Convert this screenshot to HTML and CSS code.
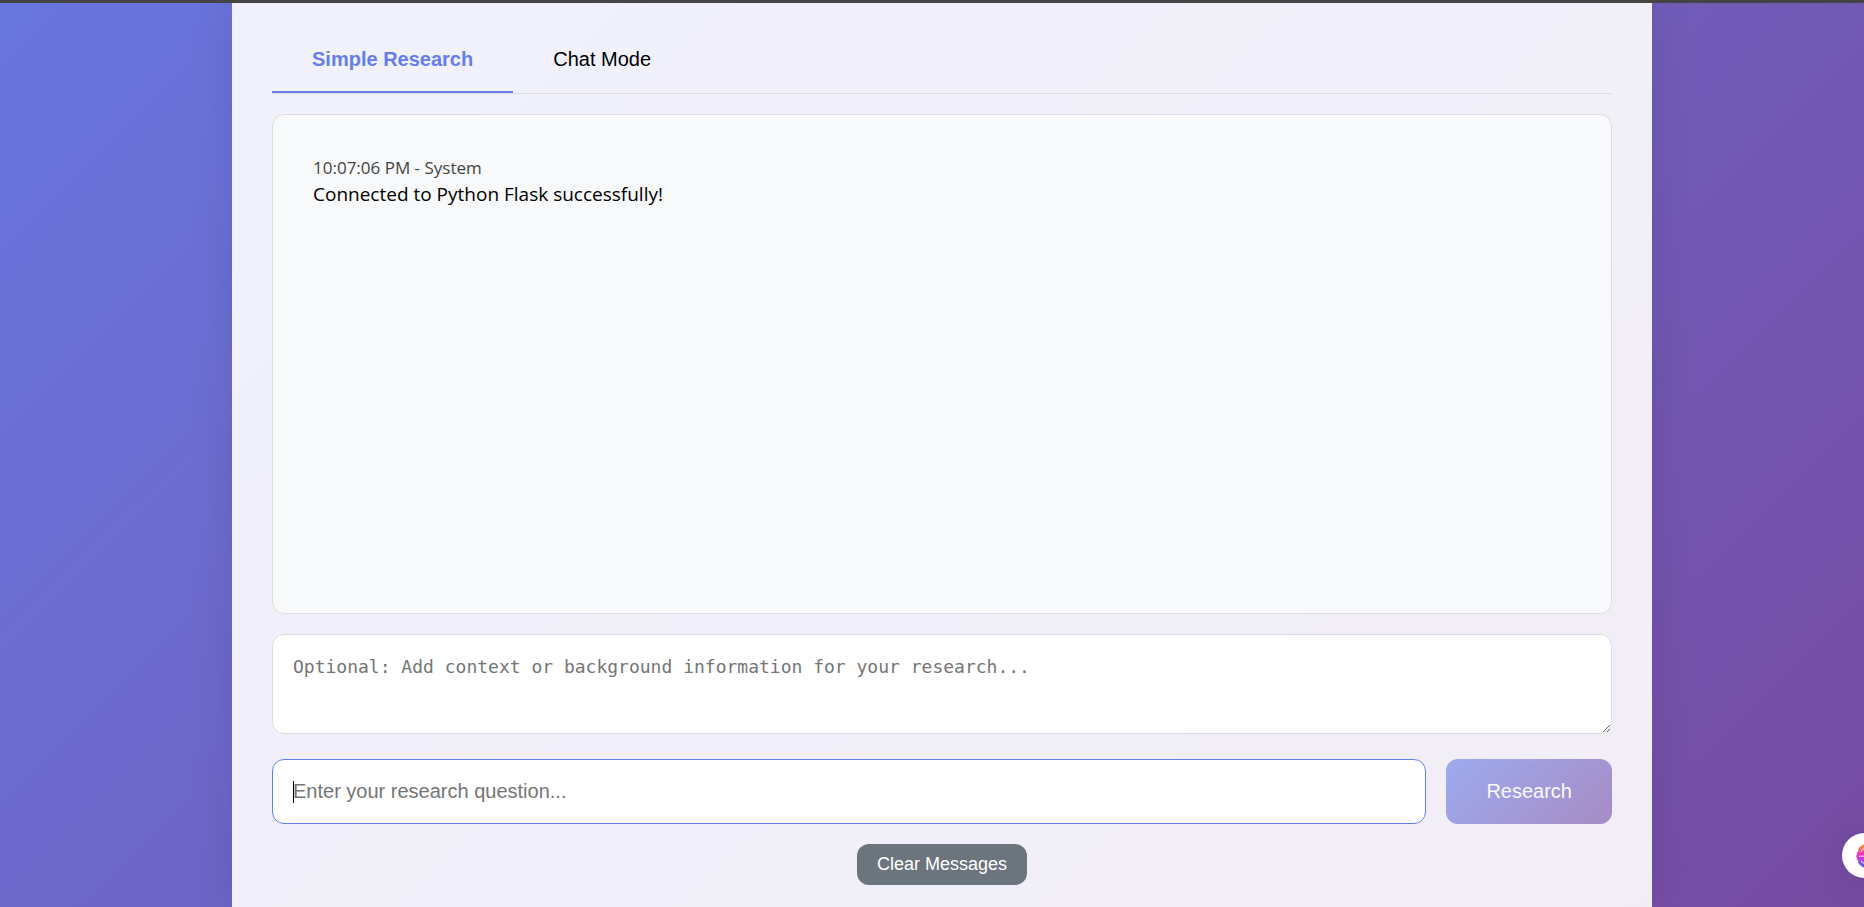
FILE: index.html
```html
<!DOCTYPE html>
<html lang="en">
<head>
<meta charset="utf-8">
<title>Research Assistant</title>
<link rel="stylesheet" href="styles.css">
</head>
<body>
<main class="container">
  <div class="tabs" role="tablist">
    <button class="tab tab-active" type="button" role="tab" aria-selected="true">Simple Research</button>
    <button class="tab" type="button" role="tab" aria-selected="false">Chat Mode</button>
  </div>
  <section class="messages" aria-label="Messages">
    <article class="message">
      <div class="message-meta">10:07:06 PM - System</div>
      <div class="message-text">Connected to Python Flask successfully!</div>
    </article>
  </section>
  <form class="research-form">
    <textarea class="field context" aria-label="Context" placeholder="Optional: Add context or background information for your research..."></textarea>
    <div class="question-row">
      <div class="question-box">
        <input class="field question" type="text" aria-label="Research question" placeholder="Enter your research question..." autofocus>
      </div>
      <button class="research-button" type="submit" disabled>Research</button>
    </div>
  </form>
  <button class="clear-button" type="button">Clear Messages</button>
</main>
<button class="assistant" type="button" aria-label="Open assistant">
  <svg class="assistant-icon" viewBox="0 0 24 24" aria-hidden="true">
    <defs>
      <linearGradient id="brain" x1="0" y1="0" x2="0" y2="1">
        <stop offset="0" stop-color="#ff9a2e"/>
        <stop offset=".15" stop-color="#fa7a50"/>
        <stop offset=".4" stop-color="#ee38b8"/>
        <stop offset=".55" stop-color="#e030d0"/>
        <stop offset=".75" stop-color="#9a4cf0"/>
        <stop offset="1" stop-color="#4a5cf5"/>
      </linearGradient>
    </defs>
    <path fill="url(#brain)" d="M12 .8C9.500 0 8.500 1.500 8 2.200 6 2.500 5 4.500 5.200 7.500 3.800 8.500 4 9.500 4 10.500 3 11.500 3 12.800 4 13.800 4 15 4.500 16 5 16.500 4.800 19 6 21 8 21.500 8.800 23 10.500 23.700 12 23c1.500.7 3.200 0 4-1.500 2-.5 3.200-2.500 3-5 .5-.5 1-1.500 1-2.700 1-1 1-2.300 0-3.300 0-1 .2-2-1.200-3C19 4.500 18 2.500 16 2.200 15.500 1.500 14.500 0 12 .8z"/>
    <path fill="none" stroke="#fff" stroke-linecap="round" d="M8.300 7.500C8.500 5.500 10 4.800 11.500 4.800M6.500 12.200H17.500M8.300 17C8.500 18.500 10 19.200 11.500 19.200M15.700 7.500C15.500 5.500 14 4.800 12.500 4.800M15.700 17C15.500 18.500 14 19.200 12.500 19.200"/>
  </svg>
</button>
</body>
</html>
```
FILE: styles.css
```css
* {
  box-sizing: border-box;
}

body {
  margin: 0;
  padding-left: 20px;
  min-height: 100vh;
  overflow: hidden;
  border-top: 3px solid #444;
  background: linear-gradient(135deg, #667eea -18%, #764ba2 100%) border-box;
  font-family: "Segoe UI", "Open Sans", sans-serif;
  font-size: 18px;
  color: #000;
}

button,
input {
  font-family: "Liberation Sans", Arial, sans-serif;
  font-size: 20px;
}

.container {
  display: flex;
  flex-direction: column;
  gap: 20px;
  max-width: 1420px;
  min-height: calc(100vh - 3px);
  margin: 0 auto;
  padding: 20px 40px;
  background: rgba(255, 255, 255, 0.9);
  box-shadow: 0 0 40px rgba(0, 0, 0, 0.1);
}

.tabs {
  display: flex;
  border-bottom: 1px solid #ddd;
}

.tab {
  padding: 25px 40px 20px;
  border: 0;
  border-bottom: 2px solid transparent;
  background: none;
  line-height: 23px;
}

.tab-active {
  border-bottom-color: #667eea;
  color: #667eea;
  font-weight: bold;
}

.messages {
  height: 500px;
  padding: 20px;
  overflow-y: auto;
  border: 1px solid #ddd;
  border-radius: 12px;
  background: #f8f9fa;
}

.message {
  padding: 20px;
}

.message-meta {
  color: #444;
  font-size: 17px;
  line-height: 26px;
}

.message-text {
  font-size: 19px;
  line-height: 26px;
}

.research-form {
  display: flex;
  flex-direction: column;
  gap: 25px;
}

.field {
  border: 1px solid #ddd;
  border-radius: 12px;
  outline: 0;
  background: #fff;
}

.field::placeholder {
  color: #757575;
}

.context {
  width: 100%;
  height: 100px;
  padding: 20px;
  resize: vertical;
  font-family: Consolas, "DejaVu Sans Mono", monospace;
  font-size: 18px;
  line-height: 24px;
}

.question-row {
  display: flex;
  gap: 20px;
}

.question-box {
  position: relative;
  flex: 1;
}

/* Text cursor over the focused field */
.question-box:focus-within::after {
  content: "";
  position: absolute;
  top: 22px;
  left: 21px;
  width: 1px;
  height: 22px;
  background: #000;
}

.question {
  display: block;
  width: 100%;
  height: 65px;
  padding: 20px;
  caret-color: transparent;
}

.question:focus {
  border-color: #667eea;
}

.research-button {
  padding: 20px 40px;
  border: 0;
  border-radius: 12px;
  background: linear-gradient(135deg, #667eea, #764ba2);
  color: #fff;
  opacity: 0.6;
}

.clear-button {
  align-self: center;
  padding: 10px 20px;
  border: 0;
  border-radius: 12px;
  background: #6c757d;
  color: #fff;
  font-size: 18px;
  line-height: 21px;
}

.assistant {
  position: fixed;
  right: -23px;
  bottom: 29px;
  display: grid;
  place-items: center;
  width: 45px;
  height: 45px;
  padding: 0;
  border: 0;
  border-radius: 50%;
  background: #fff;
  box-shadow: 0 4px 40px rgba(0, 0, 0, 0.12);
}

.assistant-icon {
  width: 24px;
  height: 24px;
}
```
